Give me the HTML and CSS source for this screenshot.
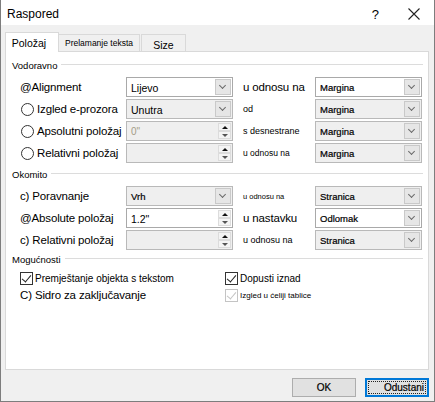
FILE: index.html
```html
<!DOCTYPE html>
<html>
<head>
    <title>Raspored</title>
    <link rel="stylesheet" href="styles.css">
</head>
<body>
    <div class="window">
        <div class="titlebar">
            <span class="title">Raspored</span>
            <span class="help">?</span>
            <svg class="close" width="12" height="12" viewBox="0 0 12 12"><path d="M0.5 0.5 L11.5 11.5 M11.5 0.5 L0.5 11.5" stroke="#222" stroke-width="1.1" fill="none"/></svg>
        </div>
        <div class="dialog">
            <div class="tabs">
                <div class="tab active">Položaj</div>
                <div class="tab tiny">Prelamanje teksta</div>
                <div class="tab size">Size</div>
            </div>
            <div class="panel">
                <div class="group">
                    <div class="group-title"><span>Vodoravno</span></div>
                    <div class="row">
                        <div class="lbl big">@Alignment</div>
                        <div class="combo white"><span class="val big-val">Lijevo</span><span class="arrow"></span></div>
                        <div class="mid big">u odnosu na</div>
                        <div class="combo white"><span class="val">Margina</span><span class="arrow"></span></div>
                    </div>
                    <div class="row">
                        <div class="lbl big"><span class="radio"></span>Izgled e-prozora</div>
                        <div class="combo"><span class="val big-val">Unutra</span><span class="arrow"></span></div>
                        <div class="mid">od</div>
                        <div class="combo"><span class="val">Margina</span><span class="arrow"></span></div>
                    </div>
                    <div class="row">
                        <div class="lbl big"><span class="radio"></span>Apsolutni položaj</div>
                        <div class="spin"><span class="val dim">0"</span><span class="spin-btns"><i class="up"></i><i class="down"></i></span></div>
                        <div class="mid">s desnestrane</div>
                        <div class="combo"><span class="val">Margina</span><span class="arrow"></span></div>
                    </div>
                    <div class="row">
                        <div class="lbl big"><span class="radio"></span>Relativni položaj</div>
                        <div class="spin"><span class="val"></span><span class="spin-btns"><i class="up"></i><i class="down"></i></span></div>
                        <div class="mid small">u odnosu na</div>
                        <div class="combo"><span class="val">Margina</span><span class="arrow"></span></div>
                    </div>
                </div>

                <div class="group tight">
                    <div class="group-title"><span>Okomito</span></div>
                    <div class="row">
                        <div class="lbl big">c) Poravnanje</div>
                        <div class="combo"><span class="val">Vrh</span><span class="arrow"></span></div>
                        <div class="mid tinier">u odnosu na</div>
                        <div class="combo"><span class="val">Stranica</span><span class="arrow"></span></div>
                    </div>
                    <div class="row">
                        <div class="lbl big">@Absolute položaj</div>
                        <div class="spin white"><span class="val big-val">1.2"</span><span class="spin-btns"><i class="up"></i><i class="down"></i></span></div>
                        <div class="mid big">u nastavku</div>
                        <div class="combo white"><span class="val">Odlomak</span><span class="arrow"></span></div>
                    </div>
                    <div class="row">
                        <div class="lbl big">c) Relativni položaj</div>
                        <div class="spin"><span class="val"></span><span class="spin-btns"><i class="up"></i><i class="down"></i></span></div>
                        <div class="mid">u odnosu na</div>
                        <div class="combo"><span class="val">Stranica</span><span class="arrow"></span></div>
                    </div>
                </div>

                <div class="group">
                    <div class="group-title"><span>Mogućnosti</span></div>
                    <div class="opts">
                        <div class="opt"><span class="check"></span>Premještanje objekta s tekstom</div>
                        <div class="opt"><span class="check"></span>Dopusti iznad</div>
                        <div class="opt big">C) Sidro za zaključavanje</div>
                        <div class="opt tiny-opt"><span class="check off"></span>Izgled u ćeliji tablice</div>
                    </div>
                </div>
            </div>
            <div class="buttons">
                <button class="btn">OK</button>
                <button class="btn focus"><span>Odustani</span></button>
            </div>
        </div>
    </div>
</body>
</html>
```

FILE: styles.css
```css
* {
    box-sizing: border-box;
}

body {
    margin: 0;
    font-family: "Liberation Sans", Arial, sans-serif;
    color: #000;
}

.window {
    width: 435px;
    height: 402px;
    border: 1px solid #7d7d7d;
    border-top: none;
    display: flex;
    flex-direction: column;
    background: #f0f0f0;
}

.titlebar {
    height: 25px;
    background: #fff;
    display: flex;
    align-items: center;
    padding-left: 6px;
    padding-top: 3px;
}

.title {
    font-size: 12px;
    flex: 1;
}

.help {
    font-size: 13px;
    margin-right: 29px;
}

.close {
    margin-right: 14px;
}

.dialog {
    flex: 1;
    padding: 6px 5px 0 4px;
}

.tabs {
    display: flex;
    align-items: flex-end;
    height: 20px;
    position: relative;
    z-index: 1;
}

.tab {
    height: 17px;
    border: 1px solid #d9d9d9;
    border-bottom: none;
    background: #f0f0f0;
    font-size: 10px;
    display: flex;
    align-items: center;
    justify-content: center;
}

.tab.active {
    height: 20px;
    width: 54px;
    background: #fff;
    padding-right: 6px;
    margin-bottom: -1px;
    font-size: 10.5px;
}

.tab.tiny {
    width: 81px;
    font-size: 8.5px;
    align-items: flex-start;
    padding-top: 3px;
    border-left: none;
}

.tab.size {
    width: 45px;
    margin-left: 1px;
    padding-top: 3px;
    font-size: 10.5px;
}

.panel {
    height: 319px;
    background: #fff;
    border: 1px solid #d9d9d9;
    padding: 7px 5px 0 6px;
}

.group {
    margin-bottom: 5px;
}

.group.tight {
    margin-bottom: 3px;
}

.group-title {
    display: flex;
    align-items: center;
    font-size: 9.5px;
    height: 12px;
    margin-bottom: 6px;
}

.group-title::after {
    content: "";
    flex: 1;
    height: 1px;
    background: #dcdcdc;
    margin-left: 4px;
    margin-top: -1px;
}

.row {
    display: flex;
    align-items: center;
    height: 20px;
    margin-bottom: 2px;
    padding-left: 8px;
}

.lbl {
    width: 106px;
    display: flex;
    align-items: center;
    white-space: nowrap;
}

.big {
    font-size: 11.5px;
    letter-spacing: -0.15px;
}

.radio {
    width: 13px;
    height: 13px;
    border: 1px solid #333;
    border-radius: 50%;
    background: #fff;
    margin: 0 3px 0 1px;
    flex: none;
}

.combo, .spin {
    width: 107px;
    height: 20px;
    border: 1px solid #b9b9b9;
    background: #efefef;
    display: flex;
    align-items: stretch;
}

.combo.white, .spin.white {
    background: #fff;
    border-color: #a9a9a9;
}

.val {
    flex: 1;
    font-size: 9.5px;
    padding-left: 4px;
    padding-top: 1px;
    display: flex;
    align-items: center;
    -webkit-text-stroke: 0.2px #000;
}

.val.big-val {
    font-size: 10.5px;
    -webkit-text-stroke: 0;
}

.val.dim {
    color: #a39c86;
    -webkit-text-stroke: 0;
    font-size: 10px;
}

.arrow {
    width: 16px;
    margin: 1px;
    background: #e6e6e6;
    border: 1px solid #c9c9c9;
    position: relative;
}

.arrow::after {
    content: "";
    position: absolute;
    left: 4px;
    top: 3px;
    width: 4px;
    height: 4px;
    border-right: 1px solid #6a6a6a;
    border-bottom: 1px solid #6a6a6a;
    transform: rotate(45deg);
}

.spin-btns {
    width: 13px;
    margin: 1px;
    display: flex;
    flex-direction: column;
    background: #f4f4f4;
}

.spin-btns i {
    flex: 1;
    display: flex;
    align-items: center;
    justify-content: center;
    border: 1px solid #dcdcdc;
}

.spin-btns i::after {
    content: "";
    border-left: 3px solid transparent;
    border-right: 3px solid transparent;
}

.spin-btns .up::after {
    border-bottom: 3px solid #111;
}

.spin-btns .down::after {
    border-top: 3px solid #555;
}

.mid {
    width: 72px;
    margin-left: 10px;
    font-size: 9px;
    white-space: nowrap;
}

.mid.big {
    font-size: 11.5px;
}

.mid.small {
    font-size: 8.5px;
}

.mid.tinier {
    font-size: 7.5px;
}

.opts {
    display: grid;
    grid-template-columns: 205px 1fr;
    row-gap: 1px;
    padding-left: 8px;
}

.opt {
    display: flex;
    align-items: center;
    font-size: 10px;
    height: 15px;
    white-space: nowrap;
}

.opt.big {
    font-size: 11.5px;
    height: 16px;
}

.tiny-opt {
    font-size: 8px;
    height: 16px;
}

.check {
    width: 13px;
    height: 13px;
    border: 1px solid #333;
    background: #fff;
    margin-right: 2px;
    position: relative;
}

.check::after {
    content: "";
    position: absolute;
    left: 3px;
    top: 0px;
    width: 4px;
    height: 8px;
    border-right: 1px solid #222;
    border-bottom: 1px solid #222;
    transform: rotate(40deg);
}

.check.off {
    border-color: #c4c4c4;
}

.check.off::after {
    border-color: #c4c4c4;
}

.buttons {
    display: flex;
    justify-content: flex-end;
    gap: 9px;
    margin-top: 8px;
}

.btn {
    width: 64px;
    height: 19px;
    border: 1px solid #adadad;
    background: #e1e1e1;
    font-family: "Liberation Sans", Arial, sans-serif;
    font-size: 10px;
    padding: 0;
    -webkit-text-stroke: 0.2px #000;
}

.btn.focus {
    border: 2px solid #0078d7;
    padding: 1px;
}

.btn.focus span {
    display: flex;
    align-items: center;
    justify-content: flex-end;
    height: 100%;
    border: 1px dotted #222;
    padding-right: 1px;
}
```
